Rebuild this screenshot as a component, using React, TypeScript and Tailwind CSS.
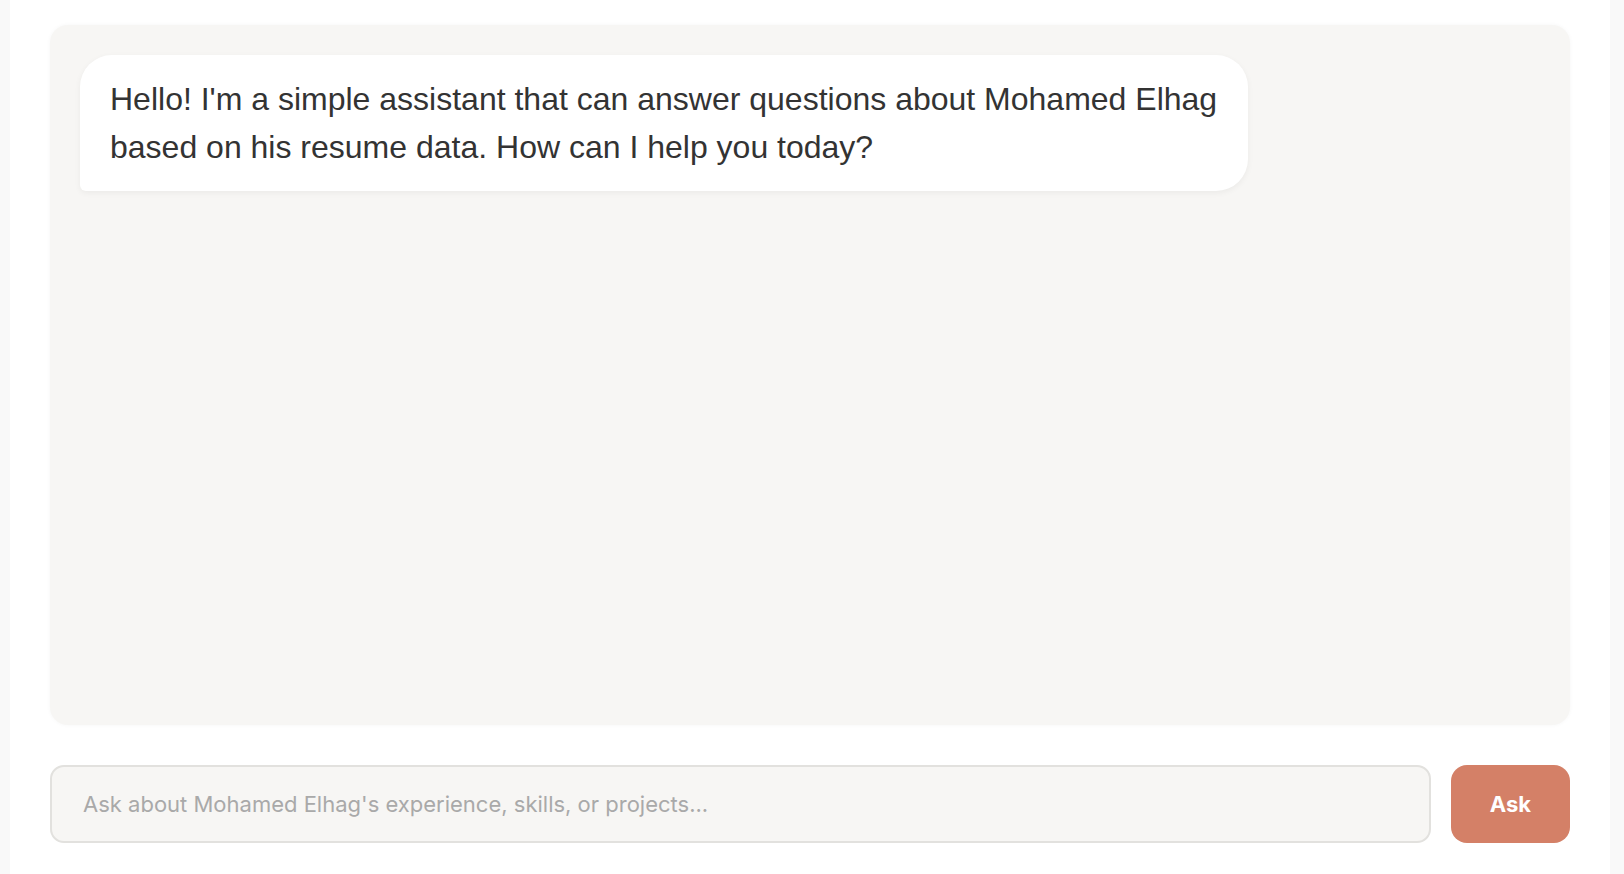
export default function App() {
  return (
    <div className="min-h-screen bg-[#f9f9f9] font-['Liberation_Sans',Arial,sans-serif]">
      <div className="ml-[10px] h-[874px] w-[1600px] bg-white px-10 pt-[25px]">
        <div className="h-[700px] rounded-[18px] bg-[#f7f6f4] p-[30px] shadow-[0_0_4px_rgba(0,0,0,0.04)]">
          <div className="w-[1168px] rounded-[32px] rounded-bl-[6px] bg-white px-[30px] py-5 text-[32px] leading-[48px] text-[#333333] shadow-[0_2px_6px_rgba(0,0,0,0.05)]">
            Hello! I'm a simple assistant that can answer questions about Mohamed Elhag based on his
            resume data. How can I help you today?
          </div>
        </div>
        <form className="mt-10 flex gap-5" onSubmit={(e) => e.preventDefault()}>
          <input
            type="text"
            placeholder="Ask about Mohamed Elhag's experience, skills, or projects..."
            className="h-[78px] flex-1 rounded-[14px] border-2 border-[#e2e1de] bg-[#f7f6f4] px-[31px] font-['Inter',sans-serif] text-[22px] text-[#333] placeholder:text-[#a9a9a9] outline-none"
          />
          <button
            type="submit"
            className="h-[78px] w-[119px] rounded-[16px] bg-[#d48067] font-['Inter',sans-serif] text-[22px] font-bold text-white"
          >
            Ask
          </button>
        </form>
      </div>
    </div>
  );
}
